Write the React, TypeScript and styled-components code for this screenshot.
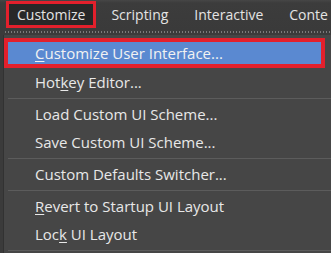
import React from 'react';
import styled, { createGlobalStyle } from 'styled-components';

const GlobalStyle = createGlobalStyle`
  html, body {
    margin: 0;
    padding: 0;
    background: #3b3b3b;
    overflow: hidden;
  }
  body {
    font-family: 'Open Sans', 'Liberation Sans', sans-serif;
  }
`;

const Screen = styled.div`
  width: 331px;
  height: 253px;
  background: #3b3b3b;
  display: flex;
  flex-direction: column;
  overflow: hidden;
`;

const MenuBar = styled.div`
  display: flex;
  align-items: stretch;
  gap: 4px;
  height: 30px;
  padding: 1px 0 0 6px;
  box-sizing: border-box;
  background: linear-gradient(#464646 0, #3c3c3c 3px, #3a3a3a 100%);
  white-space: nowrap;
  overflow: hidden;
`;

const MenuTitle = styled.div<{ $active?: boolean }>`
  display: flex;
  align-items: center;
  flex-shrink: 0;
  height: 27px;
  box-sizing: border-box;
  padding: 0 8px 1px;
  border: 3px solid ${(p) => (p.$active ? '#e3202c' : 'transparent')};
  background: ${(p) => (p.$active ? '#282828' : 'transparent')};
  color: #e4e4e4;
  font-size: 14px;
`;

const DottedRule = styled.div`
  height: 2px;
  margin: 1px 0 2px 5px;
  background-image: repeating-linear-gradient(
    90deg,
    #8a8a8a 0,
    #8a8a8a 1px,
    transparent 1px,
    transparent 3px
  );
  opacity: 0.8;
`;

const Dropdown = styled.div`
  flex: 1;
  margin-left: 3px;
  border-left: 1px solid #323232;
  background: #464646;
  display: flex;
  flex-direction: column;
  padding-top: 3px;
`;

const Item = styled.div<{ $highlighted?: boolean }>`
  display: flex;
  align-items: center;
  flex-shrink: 0;
  height: 28px;
  box-sizing: border-box;
  padding-left: 31px;
  margin-right: 4px;
  color: #e8e8e8;
  font-size: 15px;
  white-space: pre;
  ${(p) =>
    p.$highlighted &&
    `
    height: 30px;
    padding-left: 27px;
    border: 4px solid #e3202c;
    background: #5a89d1;
    color: #f2f2f2;
    margin-right: 6px;
  `}
`;

const Label = styled.span`
  white-space: pre;
`;

const Key = styled.span`
  text-decoration: underline;
  text-underline-offset: 2px;
`;

const Separator = styled.div`
  flex-shrink: 0;
  height: 1px;
  margin: 2px 0 1px 4px;
  background: #5c5c5c;
`;

type Entry =
  | { kind: 'item'; before: string; key?: string; after?: string; highlighted?: boolean }
  | { kind: 'sep' };

const entries: Entry[] = [
  { kind: 'item', before: '', key: 'C', after: 'ustomize User Interface...', highlighted: true },
  { kind: 'item', before: 'Hot', key: 'k', after: 'ey Editor...' },
  { kind: 'sep' },
  { kind: 'item', before: 'Load Custom UI Scheme...' },
  { kind: 'item', before: 'Save Custom UI Scheme...' },
  { kind: 'sep' },
  { kind: 'item', before: 'Custom Defaults Switcher...' },
  { kind: 'sep' },
  { kind: 'item', before: '', key: 'R', after: 'evert to Startup UI Layout' },
  { kind: 'item', before: 'Loc', key: 'k', after: ' UI Layout' },
  { kind: 'sep' },
];

const App = () => {
  return (
    <Screen>
      <GlobalStyle />
      <MenuBar>
        <MenuTitle $active>Customize</MenuTitle>
        <MenuTitle>Scripting</MenuTitle>
        <MenuTitle>Interactive</MenuTitle>
        <MenuTitle>Conte</MenuTitle>
      </MenuBar>
      <DottedRule />
      <Dropdown>
        {entries.map((e, i) =>
          e.kind === 'sep' ? (
            <Separator key={i} />
          ) : (
            <Item key={i} $highlighted={e.highlighted}>
              <Label>
                {e.before}
                {e.key && <Key>{e.key}</Key>}
                {e.after}
              </Label>
            </Item>
          )
        )}
      </Dropdown>
    </Screen>
  );
};

export default App;
